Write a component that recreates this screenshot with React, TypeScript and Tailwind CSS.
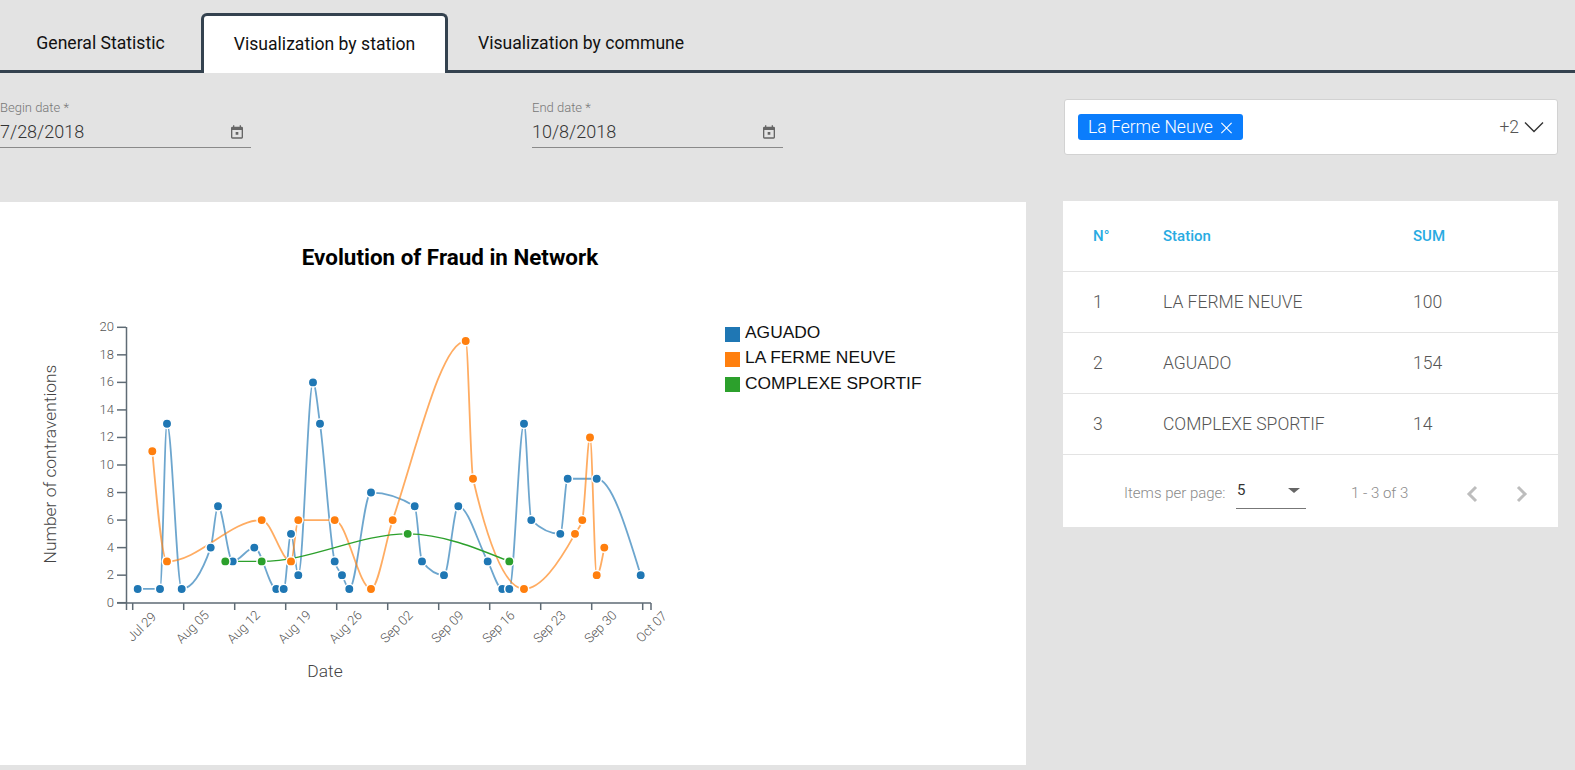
type Pt = [number, number]

const yOf = (v: number) => 602.7 - v * 13.77

const SERIES: { name: string; color: string; opacity: number; width: number; points: Pt[] }[] = [
  {
    name: 'AGUADO',
    color: '#1f77b4',
    opacity: 0.65,
    width: 1.8,
    points: [
      [137.7, 1], [160, 1], [167, 13], [181.7, 1], [210.7, 4], [218, 7], [232.7, 3], [254.3, 4], [276.3, 1],
      [283.7, 1], [291, 5], [298.3, 2], [313, 16], [320, 13], [334.7, 3], [342, 2], [349.3, 1], [371, 8],
      [414.7, 7], [422, 3], [444, 2], [458.3, 7], [487.7, 3], [502.3, 1], [509.3, 1], [524, 13], [531.3, 6],
      [560.3, 5], [567.7, 9], [596.7, 9], [640.7, 2],
    ],
  },
  {
    name: 'LA FERME NEUVE',
    color: '#ff7f0e',
    opacity: 0.65,
    width: 1.8,
    points: [
      [152.3, 11], [167, 3], [261.7, 6], [291, 3], [298.3, 6], [334.7, 6], [371, 1], [392.7, 6], [465.7, 19],
      [473, 9], [524, 1], [575, 5], [582.3, 6], [590, 12], [596.7, 2], [604.3, 4],
    ],
  },
  {
    name: 'COMPLEXE SPORTIF',
    color: '#2ca02c',
    opacity: 1,
    width: 1.4,
    points: [[225.3, 3], [261.7, 3], [407.7, 5], [509.3, 3]],
  },
]

const Y_TICKS = [0, 2, 4, 6, 8, 10, 12, 14, 16, 18, 20]
const X_TICKS = ['Jul 29', 'Aug 05', 'Aug 12', 'Aug 19', 'Aug 26', 'Sep 02', 'Sep 09', 'Sep 16', 'Sep 23', 'Sep 30', 'Oct 07']

const ROWS = [
  { n: 1, station: 'LA FERME NEUVE', sum: 100 },
  { n: 2, station: 'AGUADO', sum: 154 },
  { n: 3, station: 'COMPLEXE SPORTIF', sum: 14 },
]

// same curve as d3.curveMonotoneX
function monotonePath(points: Pt[]) {
  const pts = points.map(([x, v]) => [x, yOf(v)])
  const slopes = pts.map((p, i) => {
    if (i === 0 || i === pts.length - 1) return NaN
    const h0 = p[0] - pts[i - 1][0]
    const h1 = pts[i + 1][0] - p[0]
    const s0 = (p[1] - pts[i - 1][1]) / h0
    const s1 = (pts[i + 1][1] - p[1]) / h1
    const m = (s0 * h1 + s1 * h0) / (h0 + h1)
    return (Math.sign(s0) + Math.sign(s1)) * Math.min(Math.abs(s0), Math.abs(s1), 0.5 * Math.abs(m)) || 0
  })
  const last = pts.length - 1
  slopes[0] = (3 * (pts[1][1] - pts[0][1])) / (pts[1][0] - pts[0][0]) / 2 - slopes[1] / 2
  slopes[last] = (3 * (pts[last][1] - pts[last - 1][1])) / (pts[last][0] - pts[last - 1][0]) / 2 - slopes[last - 1] / 2
  let d = `M${pts[0][0]},${pts[0][1]}`
  for (let i = 1; i < pts.length; i++) {
    const dx = (pts[i][0] - pts[i - 1][0]) / 3
    d += `C${pts[i - 1][0] + dx},${pts[i - 1][1] + dx * slopes[i - 1]},${pts[i][0] - dx},${pts[i][1] - dx * slopes[i]},${pts[i][0]},${pts[i][1]}`
  }
  return d
}

function FraudChart() {
  return (
    <svg width="1026" height="563" viewBox="0 202 1026 563" className="block">
      <text x="450" y="265" textAnchor="middle" fontSize="22.4" fontWeight="700" fill="#000" fontFamily="Roboto, sans-serif">
        Evolution of Fraud in Network
      </text>

      {/* axes */}
      <path d="M126.5,327 V603 M117,603 H651 M651,603 V610 M126.5,603 V610" fill="none" stroke="#5f6b75" strokeWidth="1.5" />
      {Y_TICKS.map((v) => (
        <g key={v}>
          <line x1="117" x2="126" y1={yOf(v)} y2={yOf(v)} stroke="#5f6b75" strokeWidth="1.5" />
          <text x="114" y={yOf(v) + 4} textAnchor="end" fontSize="13" fontWeight="300" fill="#555" fontFamily="Roboto, sans-serif">
            {v}
          </text>
        </g>
      ))}
      {X_TICKS.map((label, i) => {
        const x = 132.7 + i * 51
        return (
          <g key={label}>
            <line x1={x} x2={x} y1="603" y2="610" stroke="#5f6b75" strokeWidth="1.5" />
            <text
              transform={`translate(${x + 12},630) rotate(-45)`}
              textAnchor="middle"
              fontSize="13"
              fontWeight="300"
              fill="#555"
              fontFamily="Roboto, sans-serif"
            >
              {label}
            </text>
          </g>
        )
      })}
      <text
        transform="translate(56,464) rotate(-90)"
        textAnchor="middle"
        fontSize="17.4"
        fontWeight="300"
        fill="#444"
        fontFamily="Roboto, sans-serif"
      >
        Number of contraventions
      </text>
      <text x="325" y="677" textAnchor="middle" fontSize="17.4" fontWeight="300" fill="#444" fontFamily="Roboto, sans-serif">
        Date
      </text>

      {/* series */}
      {SERIES.map((s) => (
        <path key={s.name} d={monotonePath(s.points)} fill="none" stroke={s.color} strokeOpacity={s.opacity} strokeWidth={s.width} />
      ))}
      {SERIES.map((s) =>
        s.points.map(([x, v]) => (
          <circle key={`${s.name}-${x}`} cx={x} cy={yOf(v)} r="4.7" fill={s.color} stroke="#fff" strokeWidth="1.5" />
        )),
      )}

      {/* legend */}
      {SERIES.map((s, i) => (
        <g key={s.name}>
          <rect x="725" y={327 + i * 25} width="15" height="15" fill={s.color} />
          <text x="745" y={337.5 + i * 25.5} fontSize="17.4" fill="#111" fontFamily="'Liberation Sans', Arial, sans-serif">
            {s.name}
          </text>
        </g>
      ))}
    </svg>
  )
}

function DateField({ label, value }: { label: string; value: string }) {
  return (
    <div className="w-[251px]">
      <div className="text-[13px] leading-[14px] font-light text-[#777]">{label}</div>
      <div className="mt-[6px] flex h-[27px] items-center justify-between border-b border-[#8a8a8a] pb-[5px] pr-[6px]">
        <span className="text-[18px] font-light text-[#333]">{value}</span>
        <svg width="16" height="16" viewBox="0 0 24 24" fill="#666">
          <path d="M19 4h-1V2h-2v2H8V2H6v2H5a2 2 0 0 0-2 2v14a2 2 0 0 0 2 2h14a2 2 0 0 0 2-2V6a2 2 0 0 0-2-2zm0 16H5V9h14v11zM10 12h4v4h-4z" />
        </svg>
      </div>
    </div>
  )
}

export default function App() {
  return (
    <div className="h-[770px] w-full overflow-hidden bg-[#e3e3e3] font-['Roboto',sans-serif]">
      {/* Tabs */}
      <div className="flex h-[73px] items-end border-b-[3px] border-[#34424f] pt-[13px]">
        <div className="flex h-[57px] w-[201px] items-center justify-center pt-[3px] text-[17.6px] text-[#111]">
          General Statistic
        </div>
        <div className="-mb-[3px] flex h-[60px] w-[247px] items-center justify-center rounded-t-[6px] border-x-[3px] border-t-[3px] border-[#34424f] bg-white text-[17.6px] text-[#111]">
          Visualization by station
        </div>
        <div className="flex h-[57px] items-center pl-[30px] pt-[3px] text-[17.6px] text-[#111]">
          Visualization by commune
        </div>
      </div>

      {/* Filters */}
      <div className="flex h-[129px] items-start">
        <div className="flex w-[1064px] gap-[281px] pt-[28px]">
          <DateField label="Begin date *" value="7/28/2018" />
          <DateField label="End date *" value="10/8/2018" />
        </div>
        <div className="mt-[26px] flex h-[56px] w-[494px] items-center justify-between rounded-[3px] border border-[#d2d2d2] bg-white pl-[13px] pr-[13px]">
          <span className="flex h-[26px] w-[165px] items-center justify-center gap-[7px] rounded-[3px] bg-[#0b7dfc] pt-[1px] text-[17.5px] font-light text-white">
            La Ferme Neuve
            <svg width="13" height="13" viewBox="0 0 14 14" stroke="#fff" strokeWidth="1.2">
              <path d="M1.5 2 L12.5 13 M12.5 2 L1.5 13" />
            </svg>
          </span>
          <span className="flex items-center gap-[5px] text-[17.5px] font-light text-[#555]">
            +2
            <svg width="20" height="12" viewBox="0 0 20 12" fill="none" stroke="#333" strokeWidth="1.4">
              <path d="M1 1.5 L10 10.5 L19 1.5" />
            </svg>
          </span>
        </div>
      </div>

      <div className="flex items-start">
        {/* Chart */}
        <div className="h-[563px] w-[1026px] bg-white">
          <FraudChart />
        </div>

        {/* Table */}
        <div className="ml-[37px] -mt-[1px] w-[495px] bg-white">
          <div className="flex h-[71px] items-center border-b border-[#e3e3e3] text-[15px] font-medium text-[#29abe2]">
            <span className="w-[100px] pl-[30px]">N°</span>
            <span className="w-[250px]">Station</span>
            <span>SUM</span>
          </div>
          {ROWS.map((row) => (
            <div key={row.n} className="flex h-[61px] items-center border-b border-[#e3e3e3] pt-[1px] text-[17.5px] font-light text-[#555]">
              <span className="w-[100px] pl-[30px]">{row.n}</span>
              <span className="w-[250px]">{row.station}</span>
              <span>{row.sum}</span>
            </div>
          ))}
          <div className="flex h-[72px] items-center pt-[5px] text-[15px] font-light text-[#8a8a8a]">
            <span className="ml-[61px] w-[112px]">Items per page:</span>
            <div className="flex h-[30px] w-[70px] items-center justify-between border-b border-[#777] pb-[6px] pl-[1px] pr-[6px] text-[15px] font-normal text-[#333]">
              5
              <span className="h-0 w-0 border-x-[6px] border-t-[5px] border-x-transparent border-t-[#666]" />
            </div>
            <span className="ml-[45px] w-[60px]">1 - 3 of 3</span>
            <svg className="ml-[53px]" width="16" height="18" viewBox="0 0 16 18" fill="none" stroke="#bdbdbd" strokeWidth="3">
              <path d="M12 2 L5 9 L12 16" />
            </svg>
            <svg className="ml-[34px]" width="16" height="18" viewBox="0 0 16 18" fill="none" stroke="#bdbdbd" strokeWidth="3">
              <path d="M4 2 L11 9 L4 16" />
            </svg>
          </div>
        </div>
      </div>
    </div>
  )
}
